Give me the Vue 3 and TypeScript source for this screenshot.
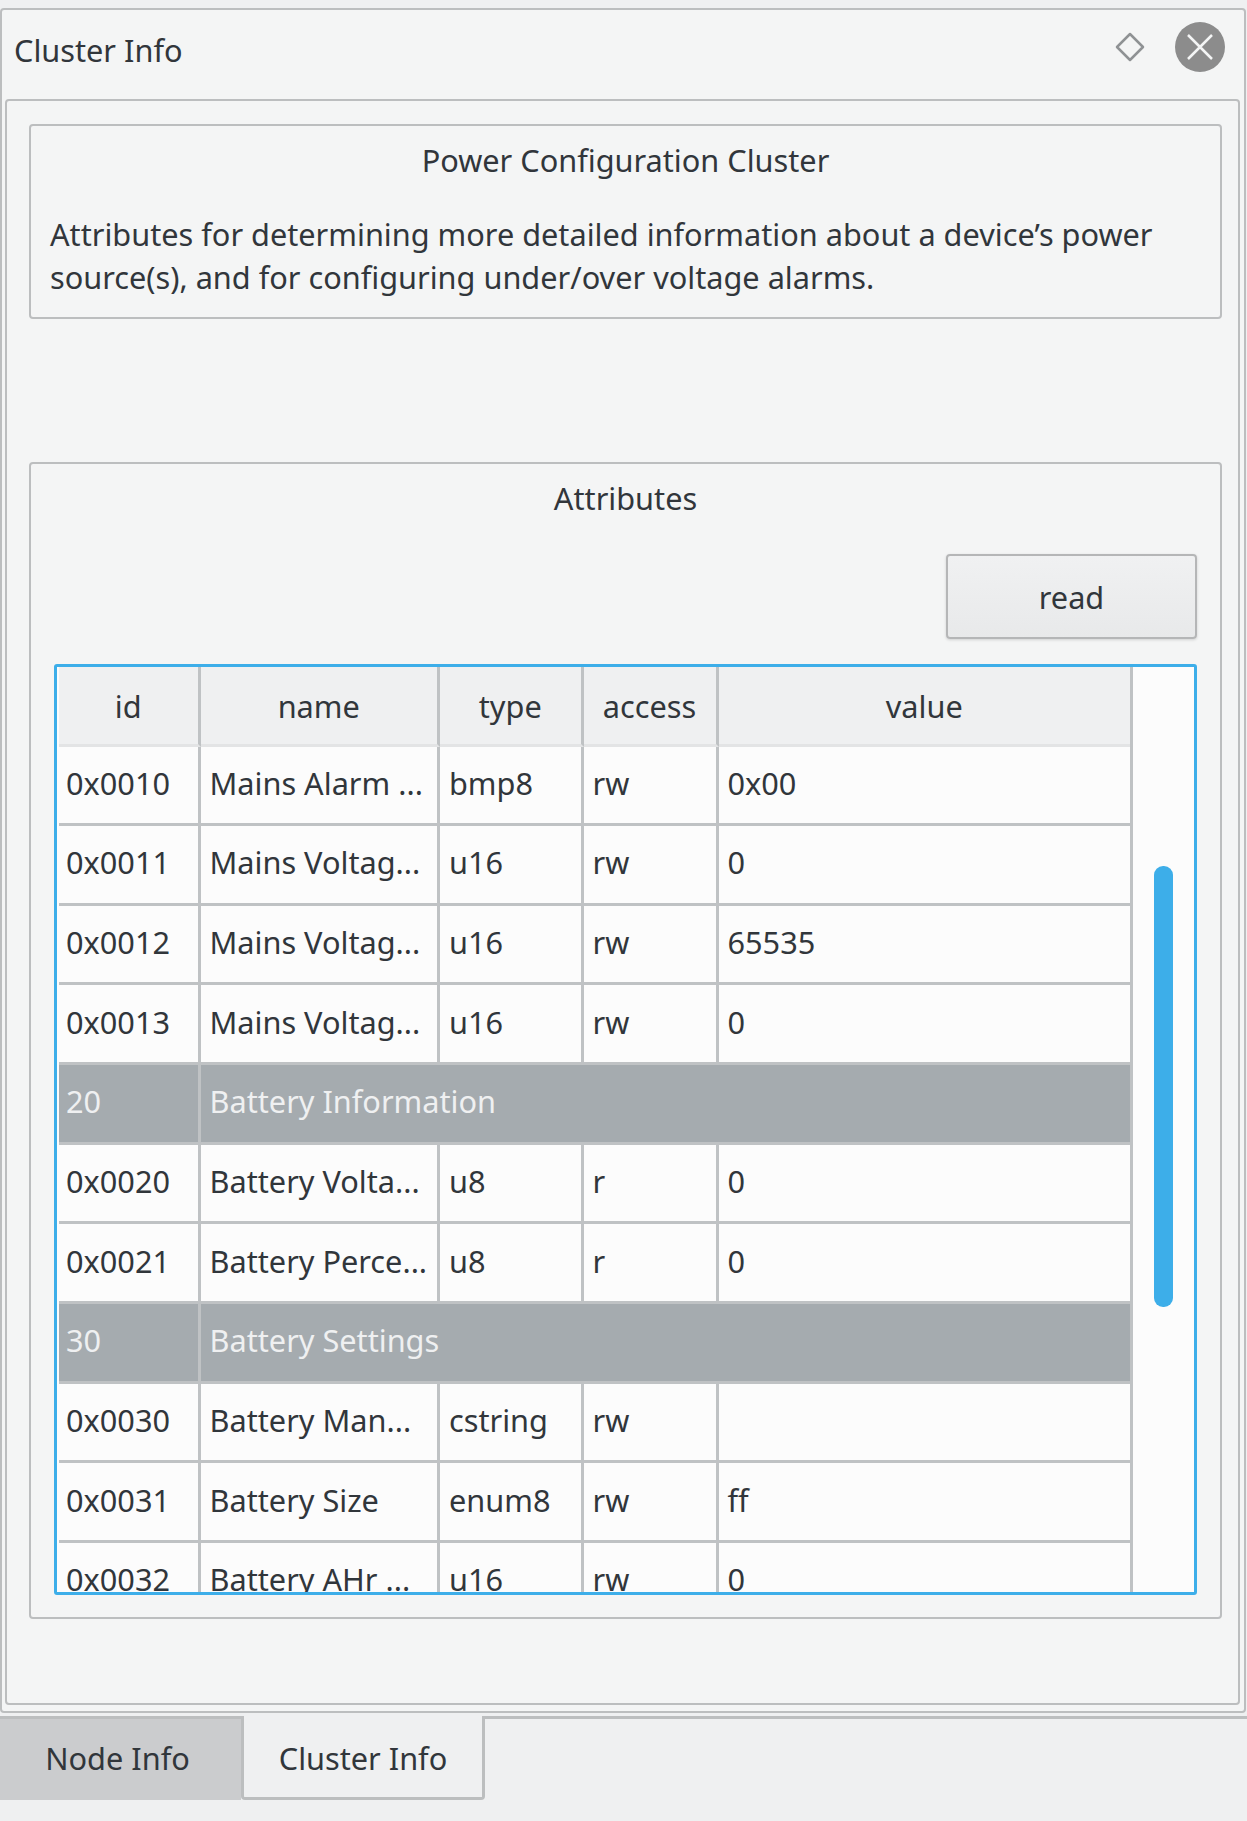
<template>
  <div class="page">
    <div class="window">
      <div class="title-bar">
        <span class="title">Cluster Info</span>
        <div class="title-actions">
          <svg class="float-icon" width="30" height="30" viewBox="0 0 30 30">
            <path d="M15 2 L28 15 L15 28 L2 15 Z" fill="none" stroke="#8f9294" stroke-width="2.5" stroke-linejoin="round" />
          </svg>
          <svg class="close-icon" width="50" height="50" viewBox="0 0 50 50">
            <circle cx="25" cy="25" r="25" fill="#8c8c8c" />
            <path d="M13 13 L37 37 M37 13 L13 37" stroke="#f4f5f5" stroke-width="2.5" />
          </svg>
        </div>
      </div>

      <div class="content">
        <section class="group info-group">
          <h2 class="group-title">Power Configuration Cluster</h2>
          <p class="description">
            Attributes for determining more detailed information about a device’s power source(s), and for configuring under/over voltage alarms.
          </p>
        </section>

        <section class="group attr-group">
          <h2 class="group-title">Attributes</h2>
          <div class="actions">
            <button class="read-button">read</button>
          </div>
          <div class="table-frame">
            <div class="table-area">
              <table class="attr-table">
                <colgroup>
                  <col class="col-id" />
                  <col class="col-name" />
                  <col class="col-type" />
                  <col class="col-access" />
                  <col class="col-value" />
                </colgroup>
                <thead>
                  <tr>
                    <th v-for="col in columns" :key="col">{{ col }}</th>
                  </tr>
                </thead>
                <tbody>
                  <template v-for="row in rows" :key="row.id">
                    <tr v-if="row.section" class="section-row">
                      <td>{{ row.id }}</td>
                      <td colspan="4">{{ row.name }}</td>
                    </tr>
                    <tr v-else>
                      <td>{{ row.id }}</td>
                      <td>{{ row.name }}</td>
                      <td>{{ row.type }}</td>
                      <td>{{ row.access }}</td>
                      <td>{{ row.value }}</td>
                    </tr>
                  </template>
                </tbody>
              </table>
            </div>
            <div class="scroll-track">
              <div class="scroll-thumb"></div>
            </div>
          </div>
        </section>
      </div>
    </div>

    <div class="tabs">
      <div class="tab">Node Info</div>
      <div class="tab active">Cluster Info</div>
    </div>
  </div>
</template>

<script setup lang="ts">
interface Row {
  id: string;
  name: string;
  type?: string;
  access?: string;
  value?: string;
  section?: boolean;
}

const columns = ['id', 'name', 'type', 'access', 'value'];

const rows: Row[] = [
  { id: '0x0010', name: 'Mains Alarm ...', type: 'bmp8', access: 'rw', value: '0x00' },
  { id: '0x0011', name: 'Mains Voltag...', type: 'u16', access: 'rw', value: '0' },
  { id: '0x0012', name: 'Mains Voltag...', type: 'u16', access: 'rw', value: '65535' },
  { id: '0x0013', name: 'Mains Voltag...', type: 'u16', access: 'rw', value: '0' },
  { id: '20', name: 'Battery Information', section: true },
  { id: '0x0020', name: 'Battery Volta...', type: 'u8', access: 'r', value: '0' },
  { id: '0x0021', name: 'Battery Perce...', type: 'u8', access: 'r', value: '0' },
  { id: '30', name: 'Battery Settings', section: true },
  { id: '0x0030', name: 'Battery Man...', type: 'cstring', access: 'rw', value: '' },
  { id: '0x0031', name: 'Battery Size', type: 'enum8', access: 'rw', value: 'ff' },
  { id: '0x0032', name: 'Battery AHr ...', type: 'u16', access: 'rw', value: '0' }
];
</script>

<style>
html,
body {
  margin: 0;
  background: #eff0f1;
}
</style>

<style scoped>
.page {
  width: 1247px;
  height: 1821px;
  overflow: hidden;
  box-sizing: border-box;
  padding-top: 8px;
  background: #eff0f1;
  font-family: "Noto Sans", sans-serif;
  font-size: 30.7px;
  color: #31363b;
}

.window {
  width: 1246px;
  height: 1705px;
  box-sizing: border-box;
  border: 2px solid #bcbebf;
  border-radius: 4px;
  background: #f4f5f5;
  padding: 0 4px 6px 3px;
  display: flex;
  flex-direction: column;
}

.title-bar {
  height: 89px;
  flex: none;
  box-sizing: border-box;
  display: flex;
  align-items: flex-start;
  justify-content: space-between;
  padding: 12px 15px 0 9px;
}

.title {
  line-height: 44px;
  margin-top: 6px;
}

.title-actions {
  display: flex;
  align-items: center;
  gap: 30px;
}

.content {
  flex: 1;
  min-height: 0;
  box-sizing: border-box;
  border: 2px solid #bcbebf;
  border-radius: 4px;
  padding: 23px 16px 84px 22px;
  display: flex;
  flex-direction: column;
  gap: 143px;
}

.group {
  box-sizing: border-box;
  border: 2px solid #bcbebf;
  border-radius: 4px;
}

.info-group {
  height: 195px;
  flex: none;
  padding: 0 19px;
}

.attr-group {
  flex: 1;
  min-height: 0;
  padding: 0 23px 22px 23px;
  display: flex;
  flex-direction: column;
}

.group-title {
  margin: 0;
  font-size: 30.7px;
  font-weight: 400;
  text-align: center;
  line-height: 44px;
  padding-top: 12px;
}

.attr-group .group-title {
  padding-top: 12px;
}

.description {
  margin: 31px 0 0;
  line-height: 43px;
}

.actions {
  display: flex;
  justify-content: flex-end;
  margin-top: 34px;
  margin-bottom: 25px;
}

.read-button {
  width: 251px;
  height: 85px;
  box-sizing: border-box;
  border: 2px solid #b5b6b7;
  border-radius: 4px;
  background: linear-gradient(#f0f1f2, #e8e9ea);
  box-shadow: 0 1px 3px rgba(0, 0, 0, 0.15);
  font: inherit;
  color: inherit;
}

.table-frame {
  flex: 1;
  min-height: 0;
  box-sizing: border-box;
  border: 3px solid #3daee9;
  border-radius: 3px;
  background: #fcfcfc;
  display: flex;
  overflow: hidden;
}

.table-area {
  width: 1074px;
  margin-left: 2px;
  flex: none;
  box-sizing: border-box;
  overflow: hidden;
  border-right: 3px solid #bfc2c4;
}

.attr-table {
  width: 1071px;
  table-layout: fixed;
  border-collapse: separate;
  border-spacing: 0;
}

.col-id { width: 141.5px; }
.col-name { width: 239.5px; }
.col-type { width: 143.5px; }
.col-access { width: 135px; }

.attr-table th,
.attr-table td {
  box-sizing: border-box;
  padding: 0 0 0 7px;
  white-space: nowrap;
  overflow: hidden;
  border-right: 3px solid #bfc2c4;
  border-bottom: 3px solid #bfc2c4;
}

.attr-table th:last-child,
.attr-table td:last-child {
  border-right: none;
}

.attr-table th {
  height: 79.5px;
  background: #eff0f1;
  font-weight: 400;
  text-align: center;
  padding: 2px 0 0;
  border-bottom-color: #e3e4e5;
}

.attr-table td {
  height: 79.67px;
  padding-bottom: 4px;
  background: #fcfcfc;
}

.attr-table td:nth-child(2) {
  padding-left: 9px;
}

.attr-table td:nth-child(3) {
  padding-left: 9px;
}

.attr-table td:nth-child(4) {
  padding-left: 9px;
}

.attr-table td:nth-child(5) {
  padding-left: 9px;
}

.section-row td {
  background: #a5abaf;
  color: #eff0f1;
}

.scroll-track {
  flex: 1;
  position: relative;
}

.scroll-thumb {
  position: absolute;
  left: 21px;
  top: 199px;
  width: 19px;
  height: 441px;
  border-radius: 9px;
  background: #3daee9;
}

.tabs {
  height: 84px;
  margin-top: 3px;
  box-sizing: border-box;
  display: flex;
  align-items: flex-start;
  border-top: 3px solid #bcbebf;
  background: #eff0f1;
}

.tab {
  width: 241px;
  height: 81px;
  box-sizing: border-box;
  background: #cbccce;
  padding: 0 6px 3px 0;
  display: flex;
  align-items: center;
  justify-content: center;
}

.tab.active {
  width: 244px;
  height: 84px;
  margin-top: -3px;
  padding: 3px 0 0;
  background: #eff0f1;
  border: 3px solid #bcbebf;
  border-top: none;
  border-radius: 0 0 4px 4px;
}
</style>
